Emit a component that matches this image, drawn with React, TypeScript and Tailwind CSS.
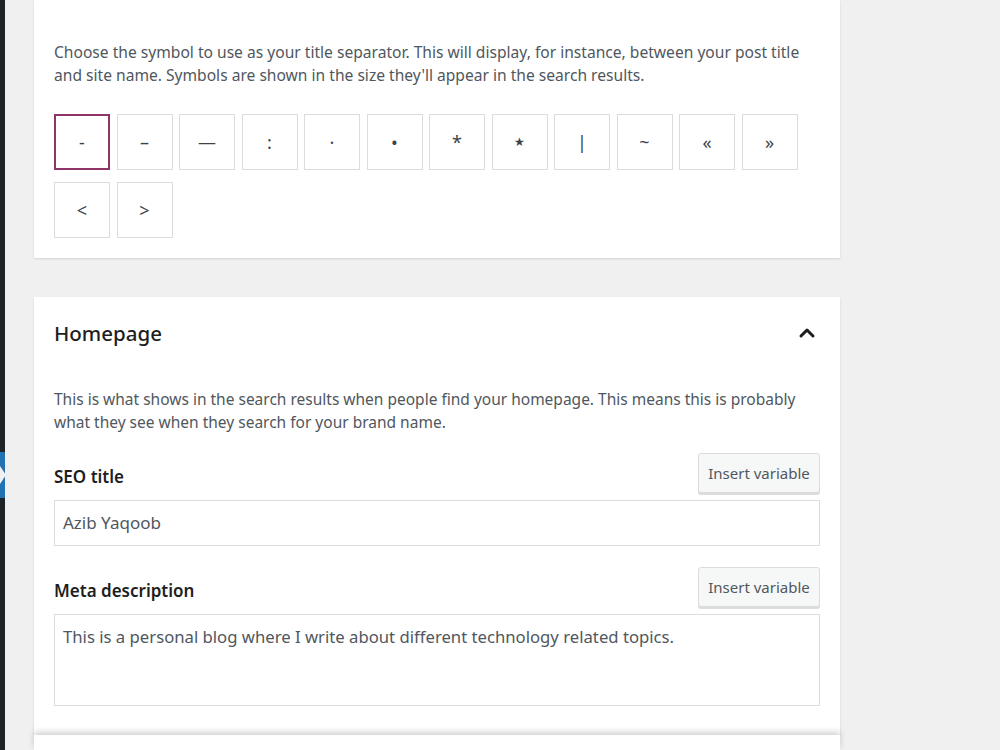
import { ChevronUp } from "lucide-react";

const separators = ["-", "–", "—", ":", "·", "•", "*", "★", "|", "~", "«", "»", "<", ">"];

function InsertButton() {
  return (
    <button className="h-10 w-[122px] rounded-[3px] border border-[#dcdcde] bg-[#f6f7f7] text-[15px] text-[#50575e] shadow-[0_2px_0_#dcdcde]">
      Insert variable
    </button>
  );
}

export default function App() {
  return (
    <div
      className="flex w-[1000px] h-[750px] overflow-hidden bg-[#f0f0f1]"
      style={{ fontFamily: '"Noto Sans", "Open Sans", sans-serif' }}
    >
      {/* Admin sidebar edge */}
      <div className="w-[5px] shrink-0 bg-[#1d2327] flex flex-col">
        <div className="h-[452px]" />
        <div className="relative h-[46px] bg-[#2271b1]">
          <div className="absolute left-0 top-[14px] w-0 h-0 border-y-[9px] border-y-transparent border-l-[6px] border-l-[#f0f0f1]" />
        </div>
      </div>

      <div className="pl-[29px] flex flex-col">
        {/* Title separator card */}
        <div className="w-[806px] bg-white px-5 pt-[41px] pb-5 shadow-[0_1px_2px_rgba(0,0,0,0.12)]">
          <p className="text-[15.6px] leading-[23px] text-[#50575e]">
            Choose the symbol to use as your title separator. This will display, for instance, between your post title
            and site name. Symbols are shown in the size they'll appear in the search results.
          </p>
          <div className="mt-[27px] flex flex-wrap gap-x-[6.5px] gap-y-3 w-[770px]">
            {separators.map((s, i) => (
              <div
                key={s}
                className={
                  i === 0
                    ? "w-14 h-14 flex items-center justify-center border-2 border-[#8f3468] text-lg text-[#3c434a]"
                    : s === "★"
                    ? "w-14 h-14 flex items-center justify-center border border-[#dcdcde] text-[12px] text-[#3c434a]"
                    : "w-14 h-14 flex items-center justify-center border border-[#dcdcde] text-lg text-[#3c434a]"
                }
              >
                {s}
              </div>
            ))}
          </div>
        </div>

        {/* Homepage card */}
        <div className="mt-[39px] w-[806px] bg-white px-5 pt-[22px] pb-[29px] shadow-[0_1px_2px_rgba(0,0,0,0.12)]">
          <div className="flex items-center justify-between">
            <h2 className="text-[20.5px] leading-[28px] font-medium text-[#1e1e1e]">Homepage</h2>
            <ChevronUp className="w-6 h-6 mr-[1px] text-[#1e1e1e]" strokeWidth={3} />
          </div>
          <p className="mt-[41px] text-[15.5px] leading-[23px] text-[#50575e]">
            This is what shows in the search results when people find your homepage. This means this is probably
            what they see when they search for your brand name.
          </p>

          <div className="mt-[19px] flex items-end justify-between">
            <span className="text-[17px] font-semibold text-[#1e1e1e] mb-[4px]">SEO title</span>
            <InsertButton />
          </div>
          <div className="mt-[7px] h-[46px] border border-[#dcdcde] flex items-center px-2 text-[17px] text-[#50575e]">
            Azib Yaqoob
          </div>

          <div className="mt-[21px] flex items-end justify-between">
            <span className="text-[17px] font-semibold text-[#1e1e1e] mb-[4px]">Meta description</span>
            <InsertButton />
          </div>
          <div className="mt-[7px] h-[92px] border border-[#dcdcde] px-2 pt-[9px] text-[16.7px] text-[#50575e]">
            This is a personal blog where I write about different technology related topics.
          </div>
        </div>

        {/* Next card, partly visible */}
        <div className="w-[806px] h-20 bg-white shadow-[0_-3px_6px_rgba(0,0,0,0.18)]" />
      </div>
    </div>
  );
}
